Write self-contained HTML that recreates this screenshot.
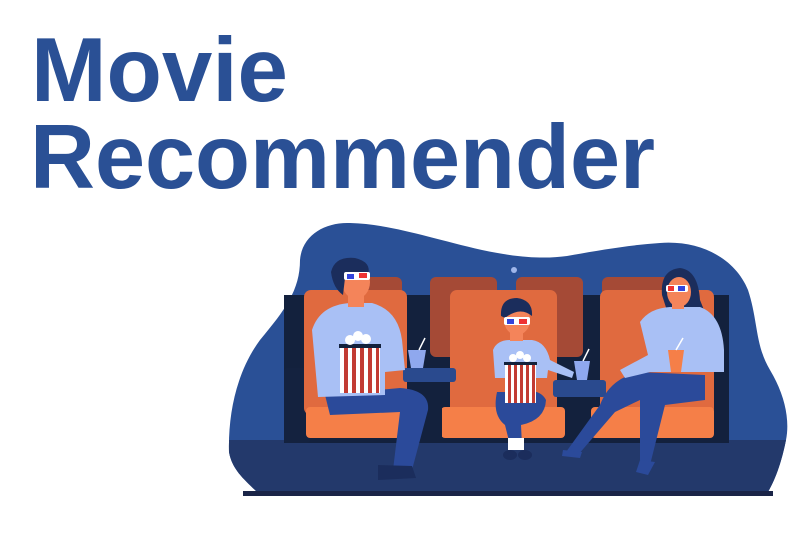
<!DOCTYPE html>
<html><head><meta charset="utf-8"><style>
html,body{margin:0;padding:0;background:#fff;width:800px;height:533px;overflow:hidden}
svg{display:block}
</style></head><body>
<svg width="800" height="533" viewBox="0 0 800 533" xmlns="http://www.w3.org/2000/svg">
<g font-family="Liberation Sans, sans-serif" font-weight="bold" fill="#2a5095">
<text x="31" y="101" font-size="91" textLength="257" lengthAdjust="spacingAndGlyphs">Movie</text>
<text x="30" y="188" font-size="91" textLength="625" lengthAdjust="spacingAndGlyphs">Recommender</text>
</g>
<clipPath id="b"><path d="M229,452 C228,410 238,370 260,340 C285,310 300,290 300,260 C302,235 325,222 350,223 C390,224 430,238 482,250 C520,258 545,259 567,256 C600,250 630,245 660,243 C700,240 735,258 748,290 C758,320 755,345 770,370 C785,395 790,420 786,440 C780,470 772,485 768,492 L257,492 C245,480 232,470 229,452 Z"/></clipPath>
<g clip-path="url(#b)">
<rect x="200" y="200" width="600" height="300" fill="#2a5096"/>
<rect x="200" y="440" width="600" height="60" fill="#23396b"/>
</g>
<circle cx="514" cy="270" r="3" fill="#9fb6ea"/>
<!-- back dark strip -->
<rect x="284" y="295" width="445" height="148" fill="#13213d"/>
<rect x="284" y="368" width="26" height="75" rx="3" fill="#14223f"/>
<!-- rear tops -->
<rect x="340" y="277" width="62" height="40" rx="6" fill="#a54a36"/>
<rect x="430" y="277" width="67" height="80" rx="6" fill="#a54a36"/>
<rect x="516" y="277" width="67" height="80" rx="6" fill="#a54a36"/>
<rect x="602" y="277" width="67" height="40" rx="6" fill="#a54a36"/>
<!-- backrests -->
<rect x="304" y="290" width="103" height="125" rx="7" fill="#e06a3f"/>
<rect x="450" y="290" width="107" height="125" rx="7" fill="#e06a3f"/>
<rect x="600" y="290" width="114" height="125" rx="7" fill="#e06a3f"/>
<!-- cushions -->
<rect x="306" y="407" width="96" height="31" rx="4" fill="#f57f48"/>
<rect x="441" y="407" width="124" height="31" rx="4" fill="#f57f48"/>
<rect x="591" y="407" width="123" height="31" rx="4" fill="#f57f48"/>
<!-- armrests -->
<rect x="403" y="368" width="53" height="14" rx="3" fill="#2a4a8e"/>
<rect x="553" y="380" width="53" height="17" rx="3" fill="#2a4a8e"/>
<rect x="412" y="382" width="30" height="60" fill="#13213d"/>
<!-- cups -->
<path d="M408,350 L426,350 L423,368 L411,368 Z" fill="#8fa8ee"/><line x1="419" y1="350" x2="425" y2="338" stroke="#fff" stroke-width="1.5"/>
<path d="M574,361 L590,361 L587,380 L577,380 Z" fill="#8fa8ee"/><line x1="583" y1="361" x2="589" y2="349" stroke="#fff" stroke-width="1.5"/>
<!-- MAN -->
<path d="M325,395 L400,388 Q430,390 428,410 L412,470 L393,470 L400,412 L330,415 Z" fill="#2b4a9a"/>
<path d="M378,465 L412,466 L416,478 L378,480 Z" fill="#1b2d5c"/>
<path d="M312,330 Q320,305 350,303 L372,303 Q398,310 402,340 L405,370 L385,372 L385,395 L318,397 Z" fill="#a9c0f5"/>
<rect x="348" y="285" width="16" height="22" fill="#f4845a"/>
<ellipse cx="356" cy="282" rx="14" ry="17" fill="#f4845a"/>
<path d="M331,272 Q335,256 355,258 Q372,262 368,275 L345,278 L343,295 Q333,288 331,272 Z" fill="#1b2d5c"/>
<rect x="344" y="272" width="26" height="8" rx="2" fill="#fff"/><rect x="347" y="274" width="7" height="5" fill="#3344dd"/><rect x="359" y="273" width="8" height="5" fill="#e33"/>
<g><rect x="340" y="347" width="40" height="46" fill="#fff"/>
<rect x="344" y="347" width="4" height="46" fill="#c23b33"/><rect x="352" y="347" width="4" height="46" fill="#c23b33"/><rect x="360" y="347" width="4" height="46" fill="#c23b33"/><rect x="368" y="347" width="4" height="46" fill="#c23b33"/><rect x="376" y="347" width="3" height="46" fill="#c23b33"/>
<rect x="339" y="344" width="42" height="4" fill="#13213d"/>
<circle cx="350" cy="340" r="5" fill="#fff"/><circle cx="358" cy="336" r="5" fill="#fff"/><circle cx="366" cy="339" r="5" fill="#fff"/></g>
<!-- KID -->
<path d="M497,392 Q492,415 505,425 L510,445 L522,445 L521,425 Q545,420 546,400 Q540,388 520,392 Z" fill="#2b4a9a"/>
<rect x="508" y="438" width="16" height="12" fill="#fff"/>
<ellipse cx="510" cy="455" rx="7" ry="5" fill="#1b2d5c"/><ellipse cx="525" cy="455" rx="7" ry="5" fill="#1b2d5c"/>
<path d="M493,350 Q497,340 510,340 L532,340 Q546,342 550,360 L574,372 L572,378 L548,370 L547,378 L495,378 Z" fill="#a9c0f5"/>
<rect x="510" y="325" width="13" height="16" fill="#f4845a"/>
<ellipse cx="517" cy="320" rx="13" ry="15" fill="#f4845a"/>
<path d="M501,316 Q500,298 517,298 Q533,300 532,316 Q520,306 505,318 Z" fill="#1b2d5c"/>
<rect x="504" y="317" width="26" height="8" rx="2" fill="#fff"/><rect x="507" y="319" width="7" height="5" fill="#3344dd"/><rect x="519" y="319" width="8" height="5" fill="#e33"/>
<g><rect x="505" y="365" width="31" height="38" fill="#fff"/>
<rect x="508" y="365" width="3" height="38" fill="#c23b33"/><rect x="514" y="365" width="3" height="38" fill="#c23b33"/><rect x="520" y="365" width="3" height="38" fill="#c23b33"/><rect x="526" y="365" width="3" height="38" fill="#c23b33"/><rect x="532" y="365" width="3" height="38" fill="#c23b33"/>
<rect x="504" y="362" width="33" height="3" fill="#13213d"/>
<circle cx="513" cy="358" r="4" fill="#fff"/><circle cx="520" cy="355" r="4" fill="#fff"/><circle cx="527" cy="358" r="4" fill="#fff"/></g>
<!-- WOMAN -->
<path d="M662,295 Q660,270 680,268 Q698,270 700,300 L712,330 L670,320 Z" fill="#1b2d5c"/>
<path d="M705,375 L640,372 Q610,378 600,405 L566,452 L578,455 L615,412 L640,400 L640,460 L650,465 L665,405 L705,400 Z" fill="#2b4a9a"/>
<path d="M563,450 L582,452 L580,458 L562,456 Z" fill="#2b4a9a"/><path d="M640,460 L655,462 L648,475 L636,472 Z" fill="#2b4a9a"/>
<path d="M640,322 Q650,308 670,307 L700,307 Q722,315 724,350 L724,372 L650,372 L625,378 L620,370 L648,355 Z" fill="#a9c0f5"/>
<rect x="672" y="295" width="12" height="14" fill="#f4845a"/>
<ellipse cx="679" cy="292" rx="12" ry="15" fill="#f4845a"/>
<rect x="666" y="285" width="22" height="7" rx="2" fill="#fff"/><rect x="668" y="286" width="6" height="5" fill="#e33"/><rect x="678" y="286" width="7" height="5" fill="#3344dd"/>
<path d="M668,350 L684,350 L681,372 L671,372 Z" fill="#f57f48"/><line x1="676" y1="350" x2="683" y2="338" stroke="#fff" stroke-width="1.5"/>
<!-- floor line -->
<rect x="243" y="491" width="530" height="5" fill="#1a2447"/>
</svg>
</body></html>
